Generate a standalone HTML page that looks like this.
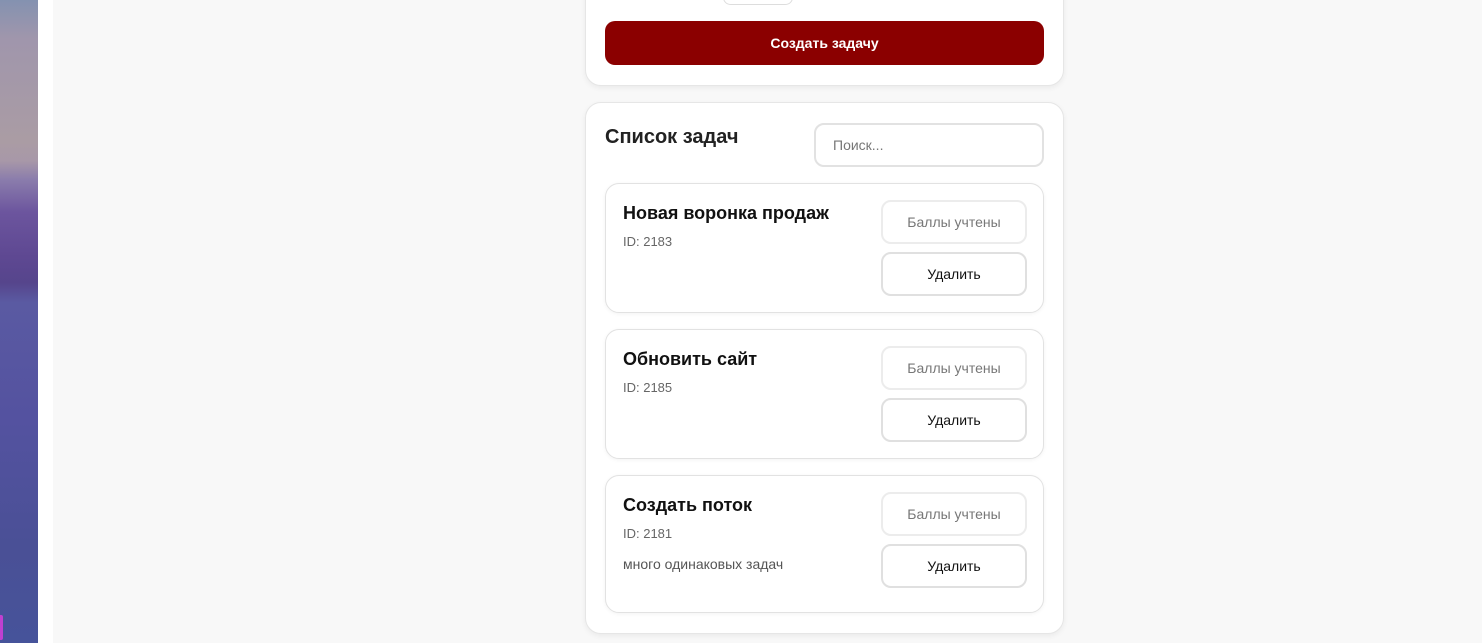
<!DOCTYPE html>
<html><head><meta charset="utf-8"><style>
*{box-sizing:border-box;margin:0;padding:0}
body{width:1482px;height:643px;overflow:hidden;background:#f8f8f8;font-family:"Liberation Sans",Arial,sans-serif;position:relative}
.strip{position:absolute;left:0;top:0;width:38px;height:643px;background:linear-gradient(180deg,#8492b0 0%,#a096ac 6%,#aa9ca4 22%,#a898a8 25%,#8a7cac 28%,#6c559e 33%,#5e4892 40%,#56458c 44%,#5a5aa2 47%,#5452a0 65%,#4a5096 85%,#46539a 100%)}
.white{position:absolute;left:38px;top:0;width:15px;height:643px;background:#fff}
.mag{position:absolute;left:0;top:615px;width:3px;height:25px;background:#c040d0;border-radius:0 2px 2px 0}
.card{position:absolute;left:585px;width:479px;background:#fff;border:1px solid #e6e6e6;border-radius:16px;box-shadow:0 2px 6px rgba(0,0,0,.06)}
.btn{position:absolute;left:605px;top:21px;width:439px;height:44px;background:#8b0000;border-radius:10px;color:#fff;font-weight:bold;font-size:14px;text-align:center;line-height:44px}
.pill{position:absolute;left:723px;top:-10px;width:70px;height:15px;border:1px solid #ddd;border-radius:8px;background:#fff}
h2{position:absolute;left:605px;top:126px;font-size:20px;font-weight:bold;color:#222}
.search{position:absolute;left:814px;top:123px;width:230px;height:44px;border:2px solid #e2e2e2;border-radius:10px;font-size:14px;color:#777;padding-left:17px;line-height:40px}
.item{position:absolute;left:605px;width:439px;border:1px solid #e2e2e2;border-radius:14px;background:#fff;box-shadow:0 1px 4px rgba(0,0,0,.05)}
.item .t{position:absolute;left:17px;top:19px;font-size:18px;font-weight:bold;color:#111}
.item .id{position:absolute;left:17px;top:50px;font-size:13px;color:#666}
.item .d{position:absolute;left:17px;top:80px;font-size:14px;color:#555}
.b{position:absolute;left:275px;width:146px;height:44px;border:2px solid #e0e0e0;border-radius:10px;text-align:center;line-height:40px;font-size:14px}
.b1{top:16px;color:#777;border-color:#ececec}
.b2{top:68px;color:#111}
</style></head><body>
<div class="strip"></div><div class="white"></div><div class="mag"></div>
<div class="card" style="top:-20px;height:106px"></div>
<div class="pill"></div>
<div class="btn">Создать задачу</div>
<div class="card" style="top:102px;height:532px"></div>
<h2>Список задач</h2>
<div class="search">Поиск...</div>
<div class="item" style="top:183px;height:130px"><div class="t">Новая воронка продаж</div><div class="id">ID: 2183</div><div class="b b1">Баллы учтены</div><div class="b b2">Удалить</div></div>
<div class="item" style="top:329px;height:130px"><div class="t">Обновить сайт</div><div class="id">ID: 2185</div><div class="b b1">Баллы учтены</div><div class="b b2">Удалить</div></div>
<div class="item" style="top:475px;height:138px"><div class="t">Создать поток</div><div class="id">ID: 2181</div><div class="d">много одинаковых задач</div><div class="b b1">Баллы учтены</div><div class="b b2">Удалить</div></div>
</body></html>
